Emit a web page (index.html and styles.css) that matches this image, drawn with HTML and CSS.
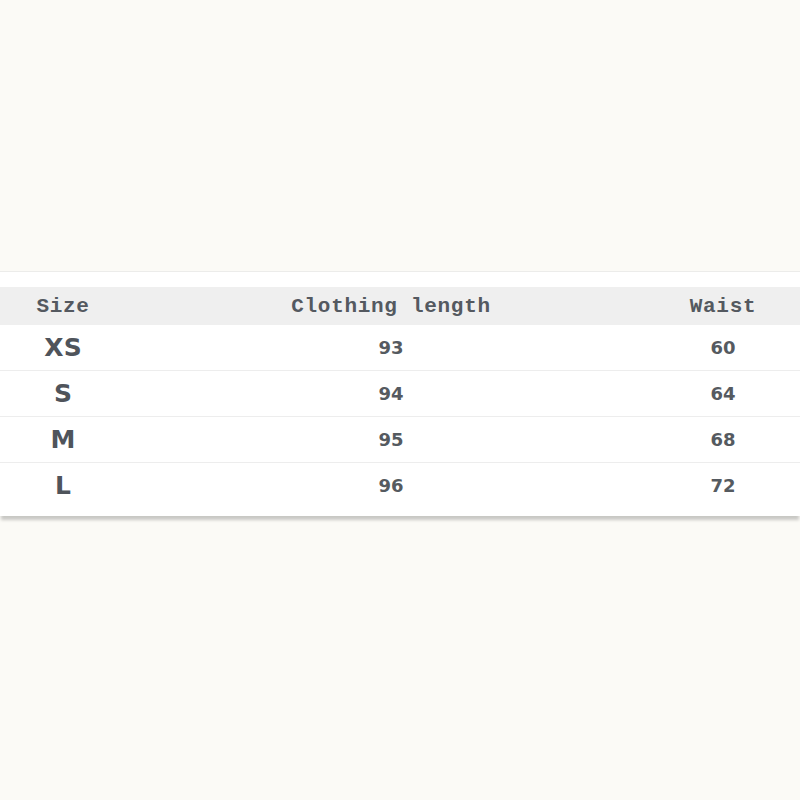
FILE: index.html
```html
<!DOCTYPE html>
<html>
<head>
<meta charset="utf-8">
<link rel="stylesheet" href="styles.css">
</head>
<body>
<div class="panel">
  <div class="row head">
    <div class="c1">Size</div>
    <div class="c2">Clothing length</div>
    <div class="c3">Waist</div>
  </div>
  <div class="row">
    <div class="c1 sz">XS</div>
    <div class="c2 num">93</div>
    <div class="c3 num">60</div>
  </div>
  <div class="row">
    <div class="c1 sz">S</div>
    <div class="c2 num">94</div>
    <div class="c3 num">64</div>
  </div>
  <div class="row">
    <div class="c1 sz">M</div>
    <div class="c2 num">95</div>
    <div class="c3 num">68</div>
  </div>
  <div class="row last">
    <div class="c1 sz">L</div>
    <div class="c2 num">96</div>
    <div class="c3 num">72</div>
  </div>
</div>
</body>
</html>
```
FILE: styles.css
```css
html, body {
  margin: 0;
  padding: 0;
  background: #fbfaf6;
}
body {
  width: 800px;
  height: 800px;
  overflow: hidden;
}
.panel {
  margin-top: 271px;
  background: #ffffff;
  border-top: 1px solid #ececea;
  padding-top: 15px;
  box-shadow: 0 5px 3px -1px rgba(0,0,0,0.2);
}
.row {
  display: flex;
  align-items: center;
  height: 45px;
  border-bottom: 1px solid #ededed;
  color: #555a60;
}
.row.head {
  height: 38px;
  background: #efefef;
  border-bottom: none;
  font-family: "Liberation Mono", "DejaVu Sans Mono", monospace;
  font-weight: bold;
  font-size: 21px;
  letter-spacing: 0.7px;
  color: #545960;
}
.row.last {
  height: 53px;
  border-bottom: none;
}
.c1, .c2, .c3 {
  text-align: center;
}
.c1 { width: 126px; }
.c2 { width: 530px; }
.c3 { width: 134px; }
.sz {
  font-family: "DejaVu Sans", Verdana, sans-serif;
  font-weight: bold;
  font-size: 25px;
  color: #4f545b;
}
.num {
  font-family: "DejaVu Sans", Verdana, sans-serif;
  font-weight: bold;
  font-size: 18px;
  color: #555a60;
}
.row.last > div {
  padding-bottom: 8px;
}
```
